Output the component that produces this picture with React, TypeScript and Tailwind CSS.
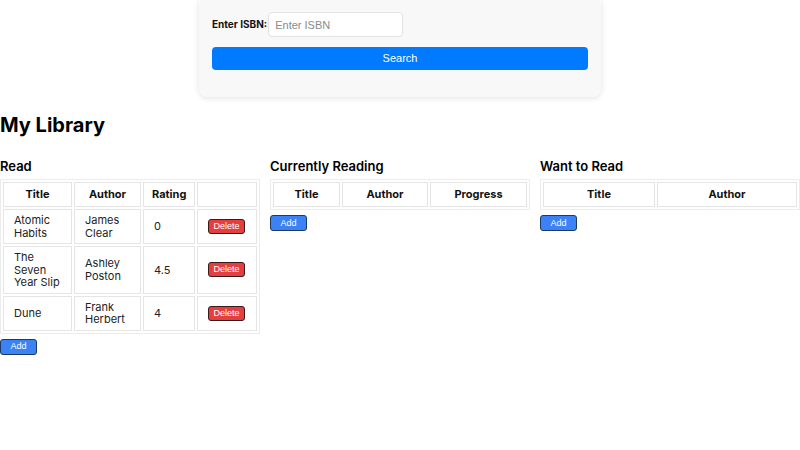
const books = [
  { title: "Atomic Habits", author: "James Clear", rating: "0" },
  { title: "The Seven Year Slip", author: "Ashley Poston", rating: "4.5" },
  { title: "Dune", author: "Frank Herbert", rating: "4" },
]

const th = "border border-[#e5e5e5] px-[8px] py-[5px] text-center font-bold text-[11px] leading-[13px] text-[#111]"
const td = "border border-[#e5e5e5] px-[10px] py-[4px] text-left text-[11px] leading-[12.5px] text-[#222]"

function AddButton() {
  return (
    <button className="block mt-[5px] w-[37px] h-[16px] rounded-[3px] border border-[#1e3a5f] bg-[#3b82f6] text-white text-[9px] font-['Liberation_Sans',Arial,sans-serif] leading-none">
      Add
    </button>
  )
}

function Section({ title, headers, children }: { title: string; headers: string[]; children?: React.ReactNode }) {
  return (
    <div className="w-[260px] flex-shrink-0">
      <h2 className="text-[13px] font-semibold leading-[16px] mb-[5px] text-black">{title}</h2>
      <table className="w-full border-separate border-spacing-[2px] border border-[#ececec] table-fixed">
        <thead>
          <tr>
            {headers.map((h, i) => (
              <th
                key={i}
                className={
                  (h === "" ? "border border-[#e5e5e5]" : th) +
                  (title === "Read" ? [" w-[69px]", " w-[67px]", " w-[52px]", ""][i] : "") +
                  (title === "Currently Reading" ? [" w-[67px]", " w-[86px]", ""][i] : "") +
                  (title === "Want to Read" ? [" w-[112px]", ""][i] : "")
                }
              >
                {h}
              </th>
            ))}
          </tr>
        </thead>
        <tbody>{children}</tbody>
      </table>
      <AddButton />
    </div>
  )
}

export default function App() {
  return (
    <div className="w-[800px] h-[450px] bg-white font-['Inter',sans-serif] text-black">
      <div className="flex justify-center">
        <div className="w-[402px] bg-[#f8f8f8] rounded-b-lg shadow-[0_1px_6px_rgba(0,0,0,0.12)] px-[13px] pt-[12px] pb-[27px]">
          <div className="flex items-center gap-[1px]">
            <label className="text-[10px] font-bold text-[#111]">Enter ISBN:</label>
            <input
              placeholder="Enter ISBN"
              className="w-[135px] h-[25px] bg-white border border-[#e3e3e3] rounded-[4px] px-[6px] text-[11px] font-['Liberation_Sans',Arial,sans-serif] placeholder:text-[#8a8a8a] outline-none"
            />
          </div>
          <button className="mt-[10px] w-full h-[23px] rounded-[4px] bg-[#007bff] text-white text-[11px] font-['Liberation_Sans',Arial,sans-serif]">
            Search
          </button>
        </div>
      </div>

      <h1 className="mt-[16px] text-[20px] font-bold leading-[24px]">My Library</h1>

      <div className="flex gap-[10px] mt-[21px]">
        <Section title="Read" headers={["Title", "Author", "Rating", ""]}>
          {books.map((b) => (
            <tr key={b.title}>
              <td className={td}>{b.title}</td>
              <td className={td}>{b.author}</td>
              <td className={td}>{b.rating}</td>
              <td className={td + " text-center"}>
                <button className="w-[37px] h-[15px] rounded-[3px] border border-[#3a1a1a] bg-[#e53e3e] text-white text-[9px] font-['Liberation_Sans',Arial,sans-serif] leading-none">
                  Delete
                </button>
              </td>
            </tr>
          ))}
        </Section>
        <Section title="Currently Reading" headers={["Title", "Author", "Progress"]} />
        <Section title="Want to Read" headers={["Title", "Author"]} />
      </div>
    </div>
  )
}
